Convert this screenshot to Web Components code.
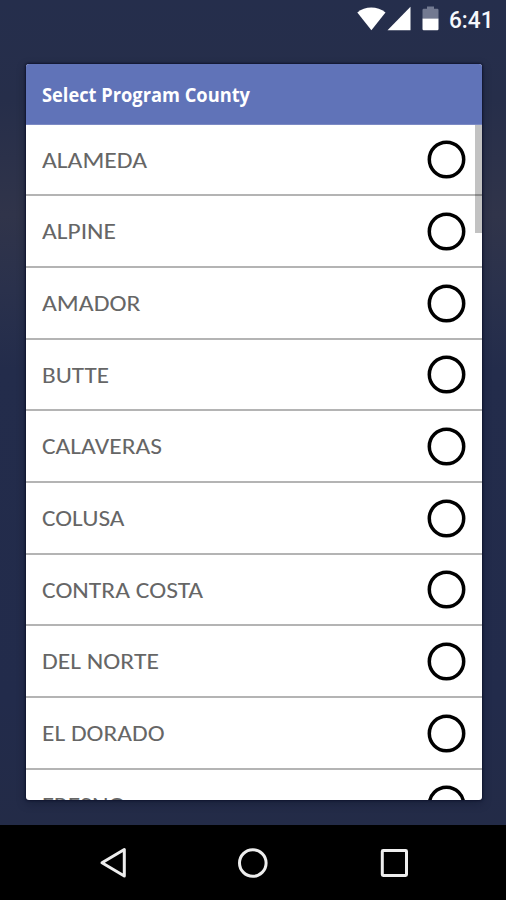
<!DOCTYPE html>
<html lang="en"><head><meta charset="utf-8"><title>Select Program County</title>
<style>html,body{margin:0;height:100%;overflow:hidden}</style></head><body>
<phone-screen></phone-screen>
<script>
class FitText extends HTMLElement{
  connectedCallback(){
    this.attachShadow({mode:'open'}).innerHTML=`<style>:host{display:block;white-space:nowrap}span{display:inline-block;transform-origin:0 50%}</style><span><slot></slot></span>`;
    const s=this.shadowRoot.querySelector('span');
    const natural=s.getBoundingClientRect().width;
    if(natural)s.style.transform=`scaleX(${this.getAttribute('width')/natural})`;
  }
}
class StatusBar extends HTMLElement{
  connectedCallback(){
    this.attachShadow({mode:'open'}).innerHTML=`<style>
    :host{display:flex;height:40px;padding-left:356px;box-sizing:border-box;color:#f6f8fc;font:500 23px/41px Roboto,sans-serif}
    svg{width:84px;height:40px;flex:none;margin-right:9px}</style>
    <svg viewBox="356 0 84 40"><path d="M357.3 12.4C365 6 377.5 6 385.5 12.4L371.4 30.3Z" fill="#fff"/><path d="M410.5 6.7V30.3H387.5Z" fill="#fff"/><path d="M422.5 18.5V10q0-1.2 1.2-1.2H427V6.5h7V8.8h3.3q1.2 0 1.2 1.2v8.5Z" fill="#737a91"/><path d="M422.5 18.5h16V29q0 1.3-1.2 1.3h-13.6q-1.2 0-1.2-1.3Z" fill="#fff"/></svg>
    <fit-text width="44.5">6:41</fit-text>`;
  }
}
class CountyRow extends HTMLElement{
  connectedCallback(){
    this.attachShadow({mode:'open'}).innerHTML=`<style>
    :host{display:flex;flex:none;justify-content:space-between;align-items:center;box-sizing:border-box;height:71.7px;padding:.6px 16.3px 0 16.5px;border-bottom:2px solid #b4b4b4;color:#666;font:400 22.8px/30px Carlito,Lato,sans-serif}
    svg{width:39px;height:39px;flex:none}</style>
    <fit-text width="${this.getAttribute('width')}">${this.getAttribute('name')}</fit-text>
    <svg viewBox="0 0 39 39"><circle cx="19.5" cy="19.5" r="17.2" fill="none" stroke="#000" stroke-width="3.5"/></svg>`;
  }
}
class CountyDialog extends HTMLElement{
  connectedCallback(){
    const rows=[['ALAMEDA',105],['ALPINE',74],['AMADOR',98.5],['BUTTE',67],['CALAVERAS',120],['COLUSA',82.5],['CONTRA COSTA',161],['DEL NORTE',117],['EL DORADO',122.5],['FRESNO',83.5]];
    this.attachShadow({mode:'open'}).innerHTML=`<style>
    :host{display:flex;flex-direction:column;position:relative;box-sizing:border-box;height:736px;margin:24px 24px 0 25.5px;border-radius:3px;overflow:hidden;background:#fff;box-shadow:0 0 2px 1px #10152f,0 3px 10px rgba(10,14,35,.35)}
    header{flex:none;box-sizing:border-box;height:60.5px;padding:0 16px 0 16.5px;background:#6073b8;border-bottom:1px solid #7c8ac4;color:#fff;font:700 19.5px/61px "Open Sans",sans-serif}
    main{display:flex;flex-direction:column;overflow:hidden;flex:1;min-height:0}
    i{position:absolute;right:0;top:60.5px;width:7px;height:108px;background:rgba(0,0,0,.24)}</style>
    <header><fit-text width="208">Select Program County</fit-text></header>
    <main>${rows.map(r=>`<county-row name="${r[0]}" width="${r[1]}"></county-row>`).join('')}</main><i></i>`;
  }
}
class NavBar extends HTMLElement{
  connectedCallback(){
    this.attachShadow({mode:'open'}).innerHTML=`<style>
    :host{display:block;height:75px;background:#000;margin-top:auto}svg{display:block;width:506px;height:75px}</style>
    <svg viewBox="0 825 506 75" fill="none" stroke="#eee" stroke-width="3" stroke-linejoin="round"><path d="M124.3 849.5V876L102 862.8Z"/><circle cx="252.8" cy="863" r="13.3"/><rect x="382.3" y="850.6" width="24.2" height="24.8" rx=".8"/></svg>`;
  }
}
class PhoneScreen extends HTMLElement{
  connectedCallback(){
    this.attachShadow({mode:'open'}).innerHTML=`<style>
    :host{display:flex;flex-direction:column;width:506px;height:900px;overflow:hidden;background:linear-gradient(#252e4c 0,#262e4a 100px,#30344a 215px,#2a314c 290px,#232c4b 370px,#222b4b 700px,#232b47 825px)}</style>
    <status-bar></status-bar><county-dialog></county-dialog><nav-bar></nav-bar>`;
  }
}
customElements.define('fit-text',FitText);
customElements.define('status-bar',StatusBar);
customElements.define('county-row',CountyRow);
customElements.define('county-dialog',CountyDialog);
customElements.define('nav-bar',NavBar);
customElements.define('phone-screen',PhoneScreen);
</script></body></html>
